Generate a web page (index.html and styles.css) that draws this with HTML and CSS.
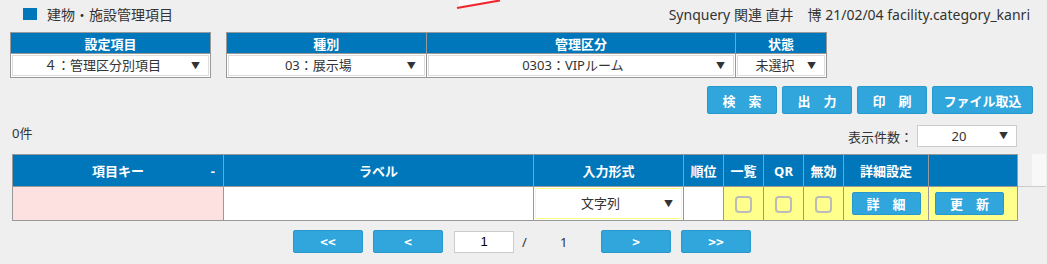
FILE: index.html
```html
<!DOCTYPE html>
<html lang="ja">
<head>
  <meta charset="UTF-8">
  <title>建物・施設管理項目</title>
  <link rel="stylesheet" href="styles.css">
</head>
<body>
  <div class="topbar">
    <div class="title"><span class="mark"></span>建物・施設管理項目</div>
    <div class="user">Synquery 関連 直井　博 21/02/04 facility.category_kanri</div>
    <svg class="scribble" width="50" height="12" viewBox="0 0 50 12">
      <path d="M4 0 L44 0 L4 6 Z" fill="#fbfbfb"/>
      <path d="M2 8 L45 0.5" stroke="#f0282e" stroke-width="2.2" fill="none"/>
    </svg>
  </div>

  <div class="filters">
    <table class="ftable w1">
      <tr><th>設定項目</th></tr>
      <tr><td><div class="sel">４：管理区分別項目<span class="arr">▼</span></div></td></tr>
    </table>
    <table class="ftable w2">
      <tr><th class="c1">種別</th><th class="c2">管理区分</th><th class="c3">状態</th></tr>
      <tr>
        <td><div class="sel">03：展示場<span class="arr">▼</span></div></td>
        <td><div class="sel">0303：VIPルーム<span class="arr">▼</span></div></td>
        <td><div class="sel small">未選択<span class="arr">▼</span></div></td>
      </tr>
    </table>
  </div>

  <div class="actions">
    <button class="btn">検　索</button>
    <button class="btn">出　力</button>
    <button class="btn">印　刷</button>
    <button class="btn wide">ファイル取込</button>
  </div>

  <div class="listbar">
    <span class="count">0件</span>
    <div class="perpage">表示件数：<div class="sel num">20<span class="arr">▼</span></div></div>
  </div>

  <div class="gridwrap">
    <table class="grid">
      <thead>
        <tr>
          <th class="k">項目キー<span class="sort">-</span></th>
          <th class="l">ラベル</th>
          <th class="t">入力形式</th>
          <th class="n">順位</th>
          <th class="n">一覧</th>
          <th class="n">QR</th>
          <th class="n">無効</th>
          <th class="d">詳細設定</th>
          <th class="u"></th>
        </tr>
      </thead>
      <tbody>
        <tr>
          <td class="pink"></td>
          <td></td>
          <td><div class="sel yel">文字列<span class="arr">▼</span></div></td>
          <td></td>
          <td class="yellow"><span class="chk"></span></td>
          <td class="yellow"><span class="chk"></span></td>
          <td class="yellow"><span class="chk"></span></td>
          <td class="yellow"><button class="btn row">詳　細</button></td>
          <td class="yellow last"><button class="btn row">更　新</button></td>
        </tr>
      </tbody>
    </table>
    <div class="scrollhead"><span></span></div>
  </div>

  <div class="pager">
    <button class="btn pg">&lt;&lt;</button>
    <button class="btn pg">&lt;</button>
    <input class="page" type="text" value="1">
    <span class="slash">/</span>
    <span class="total">1</span>
    <button class="btn pg">&gt;</button>
    <button class="btn pg">&gt;&gt;</button>
  </div>
</body>
</html>
```

FILE: styles.css
```css
body {
  margin: 0;
  background-color: #efefef;
  color: #333;
  font-family: "Noto Sans", "Noto Sans CJK JP", sans-serif;
  font-size: 13px;
}

.topbar {
  position: relative;
  display: flex;
  justify-content: space-between;
  align-items: center;
  height: 28px;
  padding: 0 17px 0 23px;
}
.title {
  display: flex;
  align-items: center;
  font-size: 14px;
  color: #333;
}
.mark {
  width: 14px;
  height: 12px;
  background-color: #0077bb;
  margin-right: 10px;
}
.user {
  font-size: 14px;
}
.scribble {
  position: absolute;
  left: 455px;
  top: 0;
}

.filters {
  display: flex;
  gap: 15px;
  padding-left: 10px;
  margin-top: 4px;
}
.ftable {
  border-collapse: collapse;
  border: 1px solid #999;
}
.ftable th {
  background-color: #0077bb;
  color: #fff;
  font-weight: bold;
  height: 20px;
  padding: 0;
  border: 1px solid #999;
  font-size: 13px;
}
.ftable td {
  background-color: #fff;
  border: 1px solid #999;
  padding: 1px;
  height: 21px;
}
.w1 { width: 201px; }
.w2 { width: 601px; }
.c1 { width: 199px; }
.c2 { width: 309px; }
.c3 { width: 90px; }

.sel {
  position: relative;
  background-color: #fff;
  border: 1px solid #ddd;
  height: 19px;
  line-height: 19px;
  text-align: center;
  font-size: 13px;
  color: #333;
  padding-right: 16px;
}
.sel.small { padding-right: 12px; }
.arr {
  position: absolute;
  right: 8px;
  top: 0;
  font-size: 9px;
  color: #333;
}
.sel.yel {
  border: 1px solid #ffff88;
  height: 29px;
  line-height: 29px;
}

.btn {
  background-color: #30a6dc;
  color: #fff;
  border: 1px solid #2898cc;
  border-radius: 2px;
  font-family: "Noto Sans CJK JP", sans-serif;
  font-weight: bold;
  font-size: 13px;
  cursor: pointer;
  padding: 0;
}
.actions {
  display: flex;
  justify-content: flex-end;
  gap: 5px;
  margin-top: 8px;
  padding-right: 14px;
}
.actions .btn {
  width: 70px;
  height: 28px;
}
.actions .wide {
  width: 101px;
}

.listbar {
  display: flex;
  justify-content: space-between;
  align-items: flex-start;
  padding: 0 30px 0 12px;
  margin-top: 11px;
}
.count {
  line-height: 16px;
}
.perpage {
  display: flex;
  align-items: center;
}
.sel.num {
  width: 82px;
  height: 20px;
  line-height: 20px;
  border-color: #ccc;
  margin-left: 4px;
}

.gridwrap {
  display: flex;
  margin: 7px 0 0 12px;
}
.grid {
  border-collapse: collapse;
  width: 1005px;
  table-layout: fixed;
}
.grid th {
  background-color: #0077bb;
  color: #fff;
  font-weight: bold;
  font-size: 13px;
  height: 31px;
  border: 1px solid #999;
  padding: 0;
  position: relative;
}
.grid td {
  background-color: #fff;
  border: 1px solid #999;
  height: 31px;
  padding: 1px;
  text-align: center;
}
.grid .k { width: 210px; }
.grid .l { width: 309px; }
.grid .t { width: 149px; }
.grid .n { width: 39px; }
.grid .d { width: 84px; }
.grid .u { width: 88px; }
.sort {
  position: absolute;
  right: 8px;
  top: 7px;
}
.grid td.pink { background-color: #fde0e0; }
.grid td.yellow { background-color: #ffff8c; }
.grid td.last {
  text-align: left;
  padding-left: 6px;
}
.chk {
  display: inline-block;
  width: 13px;
  height: 13px;
  border: 2px solid #bbb;
  border-radius: 4px;
  vertical-align: middle;
}
.btn.row {
  width: 69px;
  height: 23px;
}
.scrollhead {
  width: 28px;
  height: 32px;
  border-bottom: 1px solid #ccc;
  display: flex;
  justify-content: flex-end;
}
.scrollhead span {
  width: 14px;
  background-color: #f8f8f8;
}

.pager {
  display: flex;
  align-items: center;
  margin: 9px 0 0 293px;
}
.btn.pg {
  width: 70px;
  height: 23px;
  margin-right: 10px;
}
.page {
  width: 58px;
  height: 20px;
  border: 1px solid #ccc;
  text-align: center;
  font-size: 13px;
  padding: 0;
  margin-left: 1px;
}
.slash {
  margin: 0 0 0 8px;
  width: 38px;
}
.total {
  width: 41px;
}
```
